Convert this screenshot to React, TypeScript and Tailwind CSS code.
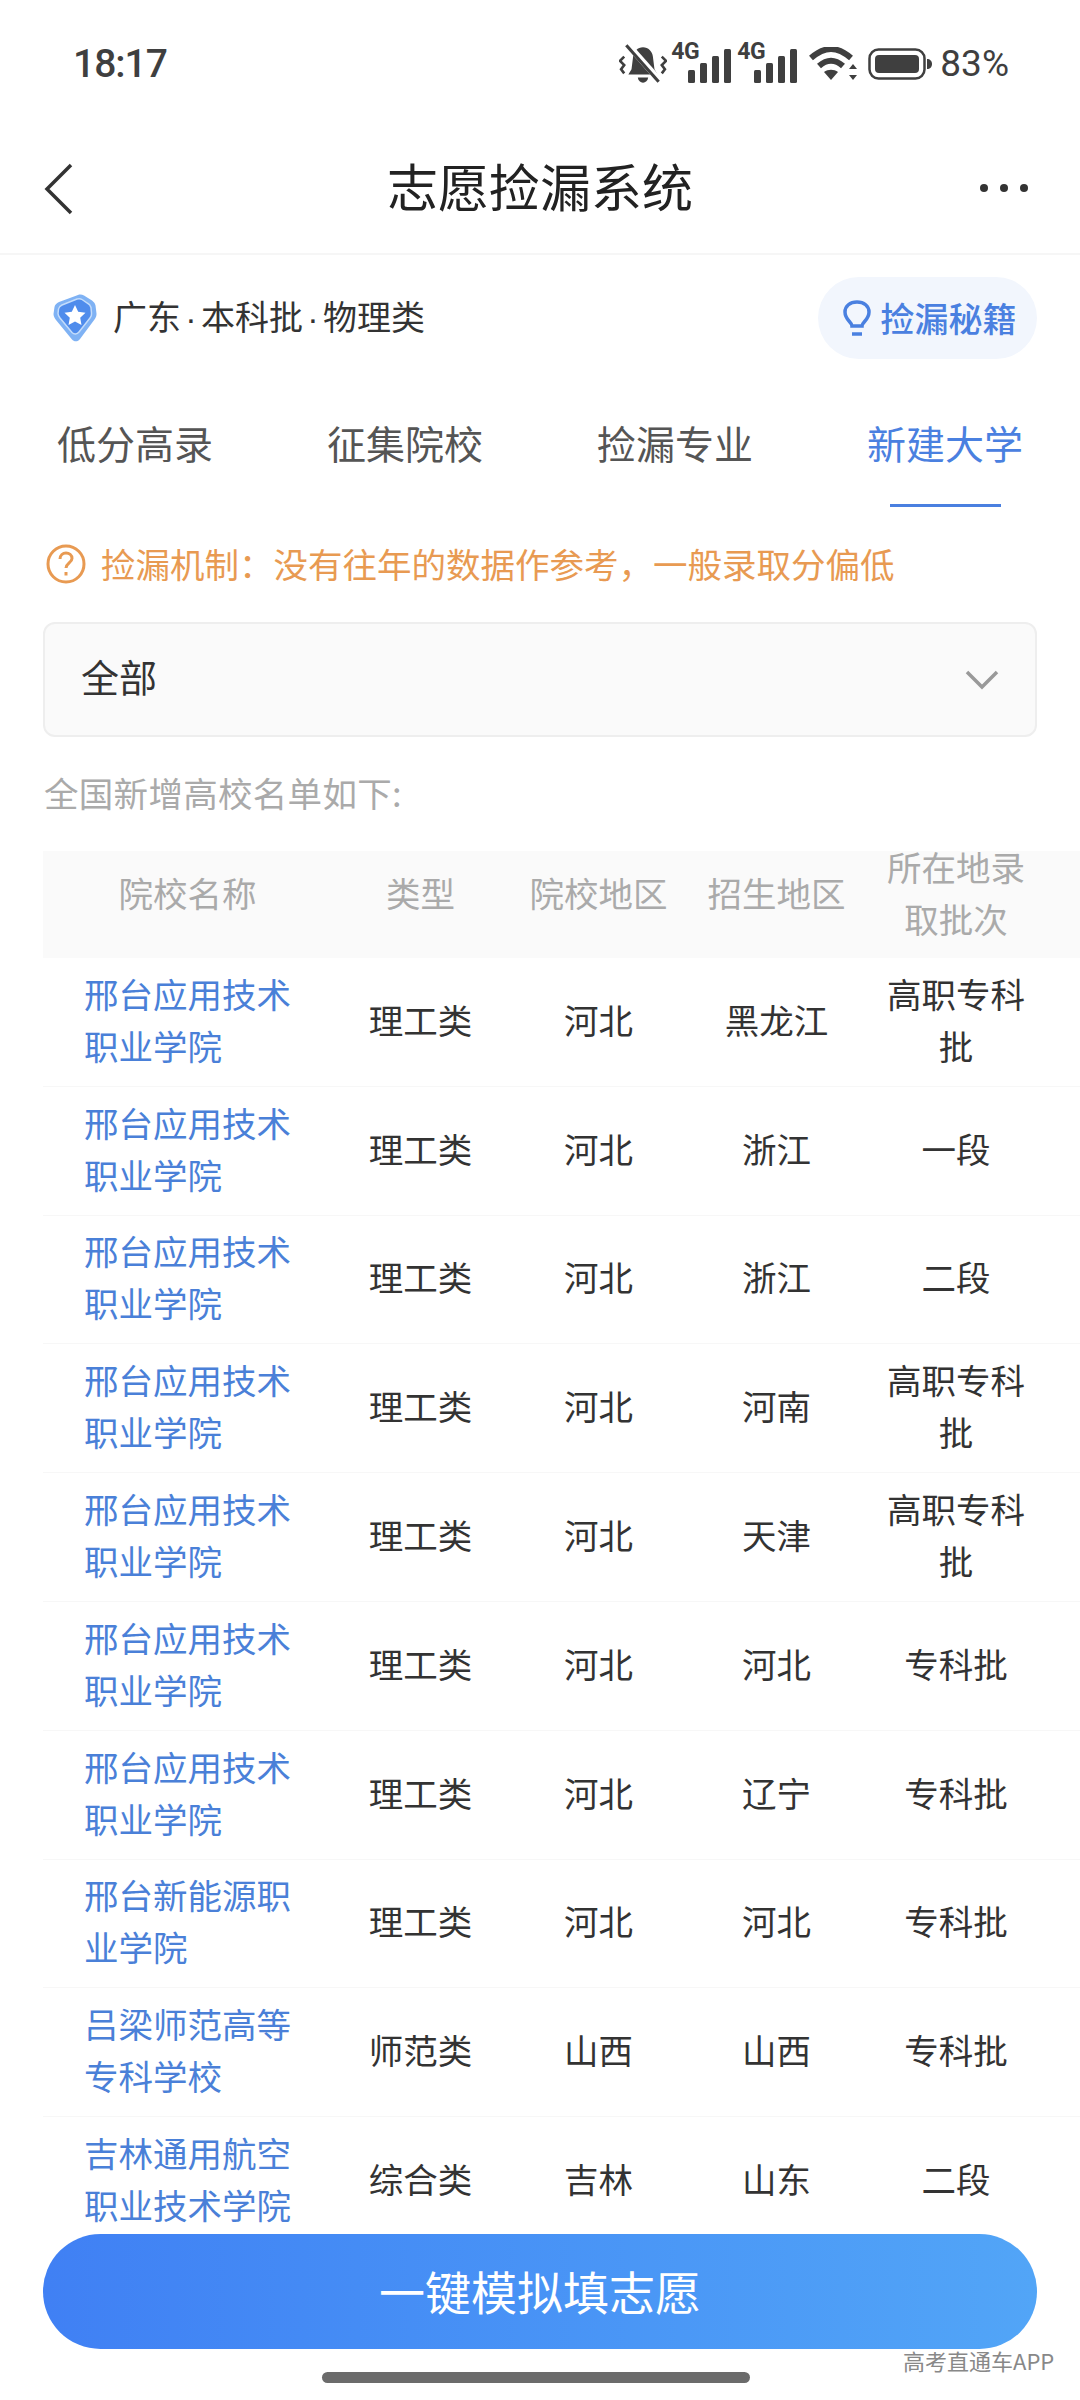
import React from "react";

const rows = [
  { name: ["邢台应用技术", "职业学院"], type: "理工类", area: "河北", zone: "黑龙江", batch: ["高职专科", "批"] },
  { name: ["邢台应用技术", "职业学院"], type: "理工类", area: "河北", zone: "浙江", batch: ["一段"] },
  { name: ["邢台应用技术", "职业学院"], type: "理工类", area: "河北", zone: "浙江", batch: ["二段"] },
  { name: ["邢台应用技术", "职业学院"], type: "理工类", area: "河北", zone: "河南", batch: ["高职专科", "批"] },
  { name: ["邢台应用技术", "职业学院"], type: "理工类", area: "河北", zone: "天津", batch: ["高职专科", "批"] },
  { name: ["邢台应用技术", "职业学院"], type: "理工类", area: "河北", zone: "河北", batch: ["专科批"] },
  { name: ["邢台应用技术", "职业学院"], type: "理工类", area: "河北", zone: "辽宁", batch: ["专科批"] },
  { name: ["邢台新能源职", "业学院"], type: "理工类", area: "河北", zone: "河北", batch: ["专科批"] },
  { name: ["吕梁师范高等", "专科学校"], type: "师范类", area: "山西", zone: "山西", batch: ["专科批"] },
  { name: ["吉林通用航空", "职业技术学院"], type: "综合类", area: "吉林", zone: "山东", batch: ["二段"] },
];

const tabs = ["低分高录", "征集院校", "捡漏专业", "新建大学"];

const SilentBell = () => (
  <svg width="48" height="40" viewBox="0 0 46 38" fill="#3f3f3f">
    <path d="M23 3c5 0 9 4 9.500 9l1.500 12 3 5H9l3-5 1.500-12C14 7 18 3 23 3z" />
    <path d="M18 32h10c-.5 3-2.500 5-5 5s-4.500-2-5-5z" />
    <path d="M9 1l30 34" stroke="#fff" strokeWidth="6" />
    <path d="M7 1l31 35" stroke="#3f3f3f" strokeWidth="3" />
    <path d="M5 12L1 16l4 4-3 4 3 4M41 12l4 4-4 4 3 4-3 4" fill="none" stroke="#3f3f3f" strokeWidth="2.500" />
  </svg>
);

const Signal = () => (
  <div className="relative h-[38px] w-[58px]">
    <span className="absolute -left-[2px] -top-[3px] text-[23px] leading-[20px] font-bold tracking-[-0.5px] text-[#3f3f3f] font-['Roboto',sans-serif]">4G</span>
    <svg className="absolute left-[15px] top-[4px]" width="43" height="34" viewBox="0 0 43 34" fill="#3f3f3f">
      <rect x="0" y="21" width="7" height="13" rx="1.500" />
      <rect x="12" y="14" width="7" height="20" rx="1.500" />
      <rect x="24" y="7" width="7" height="27" rx="1.500" />
      <rect x="36" y="0" width="7" height="34" rx="1.500" />
    </svg>
  </div>
);

const Wifi = () => (
  <svg width="48" height="34" viewBox="0 0 48 34" fill="none">
    <path d="M2 11C16 -1 28 -1 42 11" stroke="#3f3f3f" strokeWidth="6" />
    <path d="M10 19c8-7 16-7 24 0" stroke="#3f3f3f" strokeWidth="6" />
    <path d="M15 25c4-3 10-3 14 0l-7 8z" fill="#3f3f3f" />
    <path d="M44 17l4 5h-8zM44 33l-4-5h8z" fill="#3f3f3f" />
  </svg>
);

const Battery = () => (
  <svg width="64" height="32" viewBox="0 0 64 32" fill="none">
    <rect x="1.500" y="1.500" width="55" height="29" rx="9" stroke="#3f3f3f" strokeWidth="2.500" />
    <rect x="7" y="7" width="44" height="18" rx="4" fill="#3f3f3f" />
    <path d="M59 11c3 0 5 2 5 5s-2 5-5 5z" fill="#3f3f3f" />
  </svg>
);

const Badge = () => (
  <svg width="44" height="50" viewBox="0 0 44 50">
    <path d="M6 9L25 2c2-.7 4-.5 6 .5l8 5c2 1.500 3 3 3.500 5l1 8c.2 2-.5 4-2 6L27 46c-2 3-6 3-8 .5L3 27c-1.500-2-2.500-4-2.500-6l1-7c.3-2 2-4 4.500-5z" fill="#7fb2f4" />
    <path d="M9 12l15-6c2-.6 3.500-.5 5 .5l6 4c2 1 2.500 2.500 3 4l.5 6c.2 1.500-.3 3-1.500 4.500L26 39c-2 2.500-5 2.500-7 .5L7 25c-1-1.500-2-3-2-4.500l.5-4.500c.2-1.500 1.500-3 3.500-4z" fill="#4f8cec" stroke="#c3dcfb" strokeWidth="1.500" />
    <path d="M22 12l3.200 6.700 7.300 1-5.300 5.100 1.300 7.200-6.500-3.500-6.500 3.500 1.300-7.200-5.300-5.100 7.300-1z" fill="#fff" />
  </svg>
);

const Dot = () => <span className="inline-block w-[20px] text-center font-['Liberation_Sans',sans-serif]">·</span>;

const App = () => {
  return (
    <div className="relative h-[2400px] w-[1080px] overflow-hidden bg-white font-['Noto_Sans_CJK_SC',sans-serif] text-[#333]">
      <div className="flex h-[124px] items-center justify-between pl-[73px] pr-[71px] pt-[4px] font-['Roboto',sans-serif] text-[#3f3f3f]">
        <span className="text-[39px] font-medium tracking-[-1px]">18:17</span>
        <div className="flex items-center">
          <SilentBell />
          <div className="ml-[6px] flex gap-[8px]">
            <Signal />
            <Signal />
          </div>
          <div className="ml-[12px]"><Wifi /></div>
          <div className="ml-[11px]"><Battery /></div>
          <span className="ml-[8px] text-[37px]">83%</span>
        </div>
      </div>

      <div className="relative flex h-[131px] items-center justify-center border-b-2 border-[#f6f6f6] pb-[6px]">
        <svg className="absolute left-[42px] top-[38px]" width="34" height="54" viewBox="0 0 34 54" fill="none">
          <path d="M29 3L5 27l24 24" stroke="#333" strokeWidth="3.500" />
        </svg>
        <span className="text-[51px] leading-none text-[#222]">志愿捡漏系统</span>
        <div className="absolute right-[52px] top-[60px] flex gap-[12px]">
          <span className="size-[8px] rounded-full bg-[#333]" />
          <span className="size-[8px] rounded-full bg-[#333]" />
          <span className="size-[8px] rounded-full bg-[#333]" />
        </div>
      </div>

      <div className="flex h-[126px] items-center justify-between pl-[53px] pr-[43px]">
        <div className="flex items-center">
          <Badge />
          <span className="ml-[16px] -mt-[3px] text-[34px] text-[#333]">广东<Dot />本科批<Dot />物理类</span>
        </div>
        <div className="flex h-[82px] w-[219px] items-center justify-center rounded-full bg-[#f2f6fd] pl-[4px]">
          <svg width="28" height="36" viewBox="0 0 28 36" fill="none" stroke="#4a80e0" strokeWidth="3.500">
            <path d="M9 26c0-4-7-6-7-14C2 6 7 2 14 2s12 4 12 10c0 8-7 10-7 14z" />
            <path d="M9 34h10" />
          </svg>
          <span className="ml-[10px] -mt-[2px] text-[34px] font-medium text-[#4a80e0]">捡漏秘籍</span>
        </div>
      </div>

      <div className="flex h-[126px]">
        {tabs.map((t, i) => (
          <div key={t} className="relative flex w-[270px] items-start justify-center pt-[33px]">
            <span className={i === 3 ? "text-[39px] leading-[56px] text-[#4a80e0]" : "text-[39px] leading-[56px] text-[#555]"}>{t}</span>
            {i === 3 && <span className="absolute bottom-0 left-[80px] h-[3px] w-[111px] bg-[#4a80e0]" />}
          </div>
        ))}
      </div>

      <div className="mt-[29px] flex h-[55px] items-center pl-[46px]">
        <svg width="40" height="40" viewBox="0 0 40 40" fill="none" stroke="#e89a52" strokeWidth="3">
          <circle cx="20" cy="20" r="18" />
          <path d="M14 15c0-4 3-6 6-6s6 2 6 5.500c0 4-6 5-6 9.500" />
          <path d="M20 28v3.500" />
        </svg>
        <span className="ml-[15px] text-[34.500px] text-[#e89a52]">{"捡漏机制\uFF1A没有往年的数据作参考\uFF0C一般录取分偏低"}</span>
      </div>

      <div className="mx-[43px] mt-[31px] flex h-[115px] items-center justify-between rounded-[12px] border-2 border-[#eeeeee] bg-[#fafafa] pb-[8px] pl-[36px] pr-[36px]">
        <span className="text-[38px] text-[#333]">全部</span>
        <svg className="mt-[8px]" width="34" height="20" viewBox="0 0 34 20" fill="none" stroke="#999" strokeWidth="3.500">
          <path d="M2 2l15 15L32 2" />
        </svg>
      </div>

      <div className="ml-[44px] mt-[30px] h-[53px] text-[34.500px] leading-[50px] tracking-[0.3px] text-[#aaaaaa]">全国新增高校名单如下:</div>

      <div className="ml-[43px] mt-[31px]">
        <div className="h-[107px] bg-[#fafafa]">
          <div className="grid -translate-y-[11px] grid-cols-[289px_177px_179px_177px_182px_33px] items-center text-center text-[34.500px] leading-[52px] text-[#aaaaaa]">
            <span>院校名称</span>
            <span>类型</span>
            <span>院校地区</span>
            <span>招生地区</span>
            <span>所在地录<br />取批次</span>
          </div>
        </div>
        {rows.map((r, i) => (
          <div key={i} className="grid h-[128.800px] grid-cols-[289px_177px_179px_177px_182px_33px] items-center border-b border-[#f7f7f7] pb-[6px] text-center text-[34.500px] leading-[52px] text-[#333]">
            <span className="pl-[41px] text-left text-[#4a80d8]">{r.name[0]}<br />{r.name[1]}</span>
            <span>{r.type}</span>
            <span>{r.area}</span>
            <span>{r.zone}</span>
            <span>{r.batch.map((b, j) => (<React.Fragment key={b}>{j > 0 && <br />}{b}</React.Fragment>))}</span>
          </div>
        ))}
      </div>

      <div className="absolute left-0 top-[2234px] h-[166px] w-full bg-white" />
      <div className="absolute left-[43px] top-[2234px] flex h-[115px] w-[994px] items-center justify-center rounded-[58px] bg-gradient-to-r from-[#4080f4] to-[#52a5f7] pb-[2px] text-[46px] text-white">
        一键模拟填志愿
      </div>
      <span className="absolute left-[903px] top-[2345px] text-[22px] leading-[30px] text-[#888]">高考直通车APP</span>
      <div className="absolute left-[322px] top-[2372px] h-[11px] w-[428px] rounded-full bg-[#6b6b6b]" />
    </div>
  );
};

export default App;
